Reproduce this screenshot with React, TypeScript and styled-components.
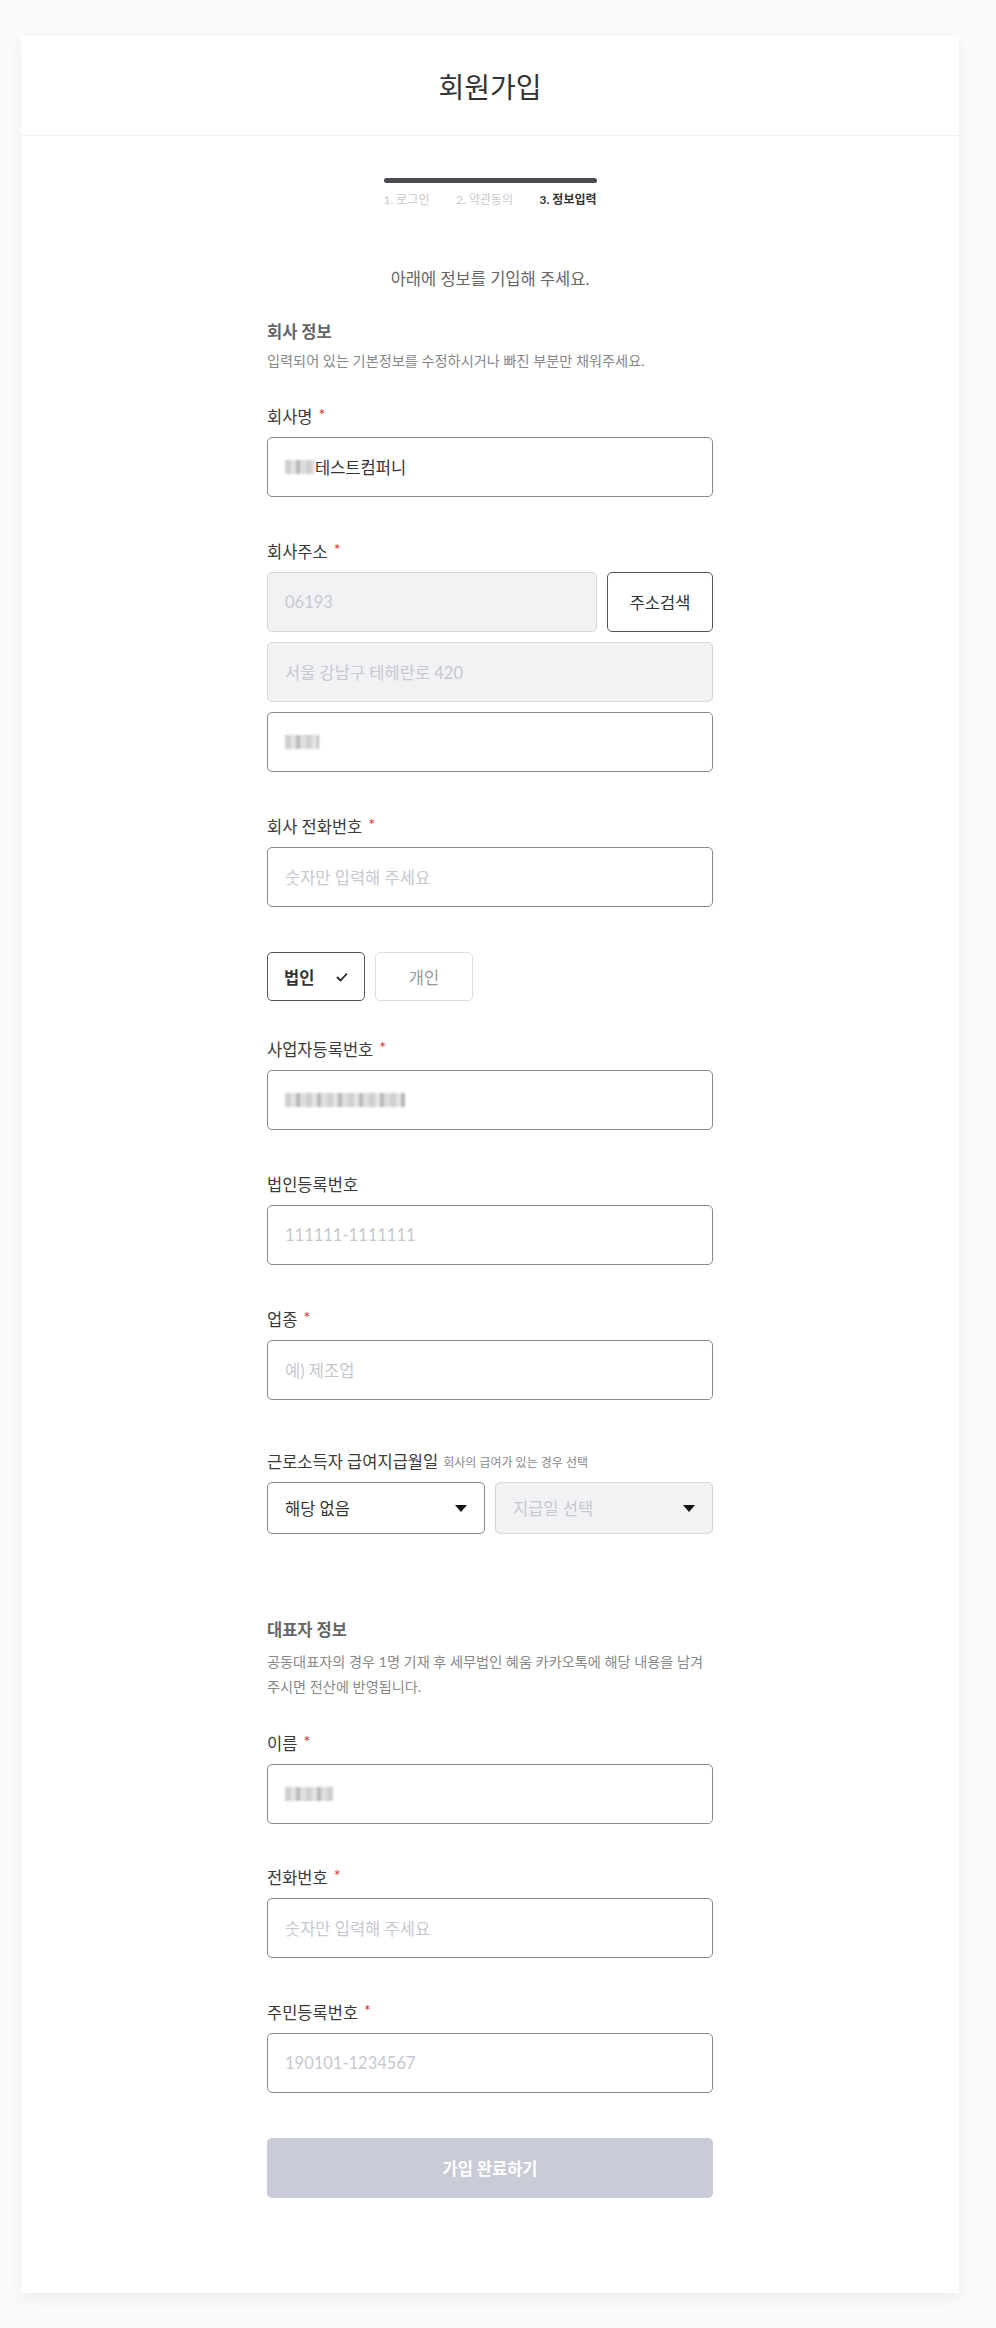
import styled, { createGlobalStyle } from "styled-components";

const GlobalStyle = createGlobalStyle`
  body {
    margin: 0;
    background: #fafafa;
    font-family: Lato, "Noto Sans CJK KR", sans-serif;
    color: #333;
  }
  * { box-sizing: border-box; }
`;

const Page = styled.div`
  padding: 36px 37px 34px 21px;
`;
const Card = styled.div`
  background: #fff;
  box-shadow: 0 6px 14px rgba(0, 0, 0, 0.05);
  padding-bottom: 95px;
`;
const Header = styled.div`
  height: 100px;
  display: flex;
  align-items: center;
  justify-content: center;
  border-bottom: 1px solid #f0f0f0;
`;
const Title = styled.h1`
  margin: 0;
  font-size: 28px;
  font-weight: 400;
  color: #333;
`;

const Steps = styled.div`
  width: 213px;
  margin: 42px auto 0;
`;
const Bar = styled.div`
  height: 5px;
  border-radius: 3px;
  background: #4b4a52;
`;
const StepRow = styled.div`
  display: flex;
  justify-content: space-between;
  margin-top: 9px;
`;
const Step = styled.span<{ $active?: boolean }>`
  font-size: 12px;
  line-height: 16px;
  font-weight: ${(p) => (p.$active ? 700 : 400)};
  color: ${(p) => (p.$active ? "#333" : "#c8c8cc")};
`;

const Intro = styled.p`
  margin: 60px 0 0;
  text-align: center;
  font-size: 16.5px;
  line-height: 22px;
  color: #666;
`;

const Form = styled.div`
  width: 446px;
  margin: 0 auto;
  display: flex;
  flex-direction: column;
`;

const SectionTitle = styled.h3<{ $top: number }>`
  margin: ${(p) => p.$top}px 0 0;
  font-size: 16.5px;
  line-height: 22px;
  font-weight: 700;
  color: #666;
`;
const SectionDesc = styled.p<{ $top?: number }>`
  margin: ${(p) => p.$top ?? 5}px 0 0;
  font-size: 14.2px;
  line-height: 25px;
  color: #888;
`;

const Field = styled.div<{ $top: number }>`
  margin-top: ${(p) => p.$top}px;
  display: flex;
  flex-direction: column;
  gap: 10px;
`;
const Label = styled.label`
  height: 20px;
  font-size: 16.5px;
  line-height: 20px;
  color: #3a3a3a;
  display: flex;
  align-items: center;
  gap: 6px;
`;
const Star = styled.span`
  color: #e02020;
  font-size: 16px;
  position: relative;
  top: -3px;
`;
const SubLabel = styled.span`
  font-size: 12px;
  color: #888;
  margin-left: -1px;
  padding-top: 2px;
`;

const Input = styled.div<{ $disabled?: boolean; $placeholder?: boolean }>`
  height: 60px;
  display: flex;
  align-items: center;
  padding: 0 17px;
  border: 1px solid ${(p) => (p.$disabled ? "#d6d8dc" : "#8a8a8a")};
  border-radius: 5px;
  background: ${(p) => (p.$disabled ? "#f1f2f4" : "#fff")};
  font-size: 16.5px;
  color: ${(p) => (p.$disabled || p.$placeholder ? "#c5c8d0" : "#333")};
`;
const Row = styled.div`
  display: flex;
  gap: 10px;
  & > div {
    flex: 1;
  }
`;
const Stack = styled.div`
  display: flex;
  flex-direction: column;
  gap: 10px;
`;
const SearchButton = styled.button`
  width: 106px;
  height: 60px;
  border: 1px solid #555;
  border-radius: 5px;
  background: #fff;
  font-family: inherit;
  font-size: 16.5px;
  color: #333;
`;

const Mosaic = styled.span<{ $w: number }>`
  display: inline-block;
  width: ${(p) => p.$w}px;
  height: 14px;
  background: repeating-linear-gradient(
    90deg,
    #cfcfcf 0 6px,
    #e4e4e4 6px 11px,
    #b8b8b8 11px 15px,
    #dedede 15px 21px
  );
  filter: blur(1px);
`;

const ToggleRow = styled.div`
  display: flex;
  gap: 10px;
  margin-top: 45px;
`;
const Toggle = styled.button<{ $on?: boolean }>`
  width: 98px;
  height: 49px;
  display: flex;
  align-items: center;
  justify-content: ${(p) => (p.$on ? "space-between" : "center")};
  padding: 0 16px;
  border: 1px solid ${(p) => (p.$on ? "#555" : "#ddd")};
  border-radius: 5px;
  background: #fff;
  font-family: inherit;
  font-size: 16.5px;
  font-weight: ${(p) => (p.$on ? 700 : 400)};
  color: ${(p) => (p.$on ? "#333" : "#999")};
`;

const SelectBox = styled.div<{ $disabled?: boolean }>`
  height: 52px;
  display: flex;
  align-items: center;
  justify-content: space-between;
  padding: 0 17px;
  border: 1px solid ${(p) => (p.$disabled ? "#d6d8dc" : "#8a8a8a")};
  border-radius: 5px;
  background: ${(p) => (p.$disabled ? "#f1f2f4" : "#fff")};
  font-size: 16.5px;
  color: ${(p) => (p.$disabled ? "#c5c8d0" : "#333")};
`;

const Submit = styled.button`
  margin-top: 45px;
  height: 60px;
  border: none;
  border-radius: 5px;
  background: #c9ccd6;
  color: #fff;
  font-family: inherit;
  font-size: 16.5px;
  font-weight: 700;
`;

const Caret = () => (
  <svg width="12" height="7" viewBox="0 0 12 7">
    <path d="M0 0h12L6 7z" fill="#111" />
  </svg>
);

const Check = () => (
  <svg width="12" height="10" viewBox="0 0 12 10">
    <path d="M1 5l3.5 3.5L11 1.5" fill="none" stroke="#222" strokeWidth="1.8" />
  </svg>
);

function Req({ children }: { children: React.ReactNode }) {
  return (
    <Label>
      {children}
      <Star>*</Star>
    </Label>
  );
}

export default function App() {
  return (
    <>
      <GlobalStyle />
      <Page>
        <Card>
          <Header>
            <Title>회원가입</Title>
          </Header>
          <Steps>
            <Bar />
            <StepRow>
              <Step>1. 로그인</Step>
              <Step>2. 약관동의</Step>
              <Step $active>3. 정보입력</Step>
            </StepRow>
          </Steps>
          <Intro>아래에 정보를 기입해 주세요.</Intro>

          <Form>
            {/* 회사 정보 */}
            <SectionTitle $top={31}>회사 정보</SectionTitle>
            <SectionDesc>입력되어 있는 기본정보를 수정하시거나 빠진 부분만 채워주세요.</SectionDesc>

            <Field $top={34}>
              <Req>회사명</Req>
              <Input>
                <Mosaic $w={30} />
                테스트컴퍼니
              </Input>
            </Field>

            <Field $top={45}>
              <Req>회사주소</Req>
              <Stack>
                <Row>
                  <Input $disabled>06193</Input>
                  <SearchButton>주소검색</SearchButton>
                </Row>
                <Input $disabled>서울 강남구 테헤란로 420</Input>
                <Input>
                  <Mosaic $w={34} />
                </Input>
              </Stack>
            </Field>

            <Field $top={45}>
              <Req>회사 전화번호</Req>
              <Input $placeholder>숫자만 입력해 주세요</Input>
            </Field>

            <ToggleRow>
              <Toggle $on>
                법인
                <Check />
              </Toggle>
              <Toggle>개인</Toggle>
            </ToggleRow>

            <Field $top={39}>
              <Req>사업자등록번호</Req>
              <Input>
                <Mosaic $w={120} />
              </Input>
            </Field>

            <Field $top={45}>
              <Label>법인등록번호</Label>
              <Input $placeholder>111111-1111111</Input>
            </Field>

            <Field $top={45}>
              <Req>업종</Req>
              <Input $placeholder>예) 제조업</Input>
            </Field>

            <Field $top={52}>
              <Label>
                근로소득자 급여지급월일
                <SubLabel>회사의 급여가 있는 경우 선택</SubLabel>
              </Label>
              <Row>
                <SelectBox>
                  해당 없음
                  <Caret />
                </SelectBox>
                <SelectBox $disabled>
                  지급일 선택
                  <Caret />
                </SelectBox>
              </Row>
            </Field>

            {/* 대표자 정보 */}
            <SectionTitle $top={85}>대표자 정보</SectionTitle>
            <SectionDesc $top={8}>
              공동대표자의 경우 1명 기재 후 세무법인 혜움 카카오톡에 해당 내용을 남겨 주시면 전산에 반영됩니다.
            </SectionDesc>

            <Field $top={35}>
              <Req>이름</Req>
              <Input>
                <Mosaic $w={48} />
              </Input>
            </Field>

            <Field $top={44}>
              <Req>전화번호</Req>
              <Input $placeholder>숫자만 입력해 주세요</Input>
            </Field>

            <Field $top={45}>
              <Req>주민등록번호</Req>
              <Input $placeholder>190101-1234567</Input>
            </Field>

            <Submit>가입 완료하기</Submit>
          </Form>
        </Card>
      </Page>
    </>
  );
}
